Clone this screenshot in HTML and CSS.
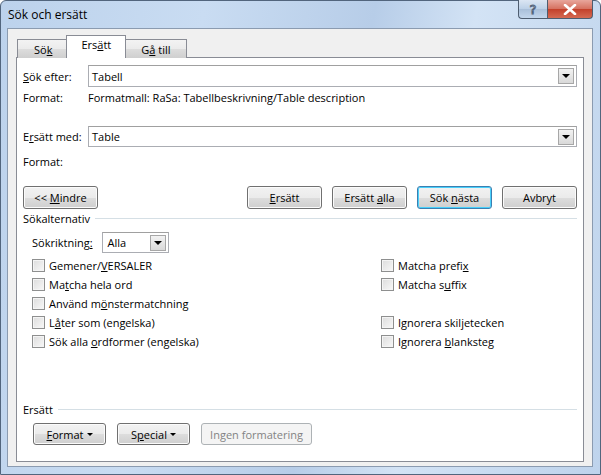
FILE: index.html
```html
<!DOCTYPE html>
<html lang="sv">
<head>
    <meta charset="UTF-8">
    <title>Sök och ersätt</title>
    <link rel="stylesheet" href="styles.css">
</head>
<body>
    <div class="window">
        <div class="titlebar">
            <span class="title">Sök och ersätt</span>
            <div class="caption-btns">
                <span class="cap-btn cap-help">?</span>
                <span class="cap-btn cap-close">
                    <svg width="14" height="11" viewBox="0 0 14 11"><path d="M2 1 L12 10 M12 1 L2 10" stroke="#fff" stroke-width="2.6" stroke-linecap="round"/></svg>
                </span>
            </div>
        </div>
        <div class="client">
            <div class="tabs">
                <span class="tab"><span>Sö<u>k</u></span></span>
                <span class="tab active"><span>Ers<u>ä</u>tt</span></span>
                <span class="tab"><span>G<u>å</u> till</span></span>
            </div>
            <div class="panel">
                <div class="field first">
                    <span class="label"><u>S</u>ök efter:</span>
                    <div class="combo"><span class="value">Tabell</span><span class="drop"></span></div>
                </div>
                <div class="format-row">
                    <span class="label">Format:</span>
                    <span>Formatmall: RaSa: Tabellbeskrivning/Table description</span>
                </div>
                <div class="field second">
                    <span class="label">E<u>r</u>sätt med:</span>
                    <div class="combo"><span class="value">Table</span><span class="drop"></span></div>
                </div>
                <div class="format-row second">
                    <span class="label">Format:</span>
                </div>
                <div class="btn-row">
                    <button class="btn">&lt;&lt; <u>M</u>indre</button>
                    <div class="btn-group">
                        <button class="btn b-replace"><u>E</u>rsätt</button>
                        <button class="btn b-all">Ersätt <u>a</u>lla</button>
                        <button class="btn b-next default">Sök <u>n</u>ästa</button>
                        <button class="btn b-cancel">Avbryt</button>
                    </div>
                </div>
                <div class="group-label"><span>Sökalternativ</span></div>
                <div class="direction">
                    <span>Sökriktning<u>:</u></span>
                    <div class="combo small"><span class="value">Alla</span><span class="drop"></span></div>
                </div>
                <div class="options">
                    <label class="opt"><span class="check"></span><span>Gemener/<u>V</u>ERSALER</span></label>
                    <label class="opt"><span class="check"></span><span>Matcha prefi<u>x</u></span></label>
                    <label class="opt"><span class="check"></span><span>Ma<u>t</u>cha hela ord</span></label>
                    <label class="opt"><span class="check"></span><span>Matcha s<u>u</u>ffix</span></label>
                    <label class="opt"><span class="check"></span><span>Använd m<u>ö</u>nstermatchning</span></label>
                    <span></span>
                    <label class="opt"><span class="check"></span><span>L<u>å</u>ter som (engelska)</span></label>
                    <label class="opt"><span class="check"></span><span>Ignorera skil<u>j</u>etecken</span></label>
                    <label class="opt"><span class="check"></span><span>Sök alla <u>o</u>rdformer (engelska)</span></label>
                    <label class="opt"><span class="check"></span><span>Ignorera <u>b</u>lanksteg</span></label>
                </div>
                <div class="group-label replace"><span>Ersätt</span></div>
                <div class="bottom-row">
                    <button class="btn small"><span><u>F</u>ormat</span><span class="arrow"></span></button>
                    <button class="btn small"><span>S<u>p</u>ecial</span><span class="arrow"></span></button>
                    <button class="btn small disabled" disabled>Ingen formatering</button>
                </div>
            </div>
        </div>
    </div>
</body>
</html>
```

FILE: styles.css
```css
body {
    margin: 0;
    font-family: "Open Sans", "Noto Sans", sans-serif;
    font-size: 11px;
    color: #000;
}
u {
    text-decoration: underline;
    text-underline-offset: 1px;
}
.window {
    width: 601px;
    height: 475px;
    box-sizing: border-box;
    display: flex;
    flex-direction: column;
    border: 1px solid #52657d;
    border-radius: 6px 6px 0 0;
    background: linear-gradient(100deg, #bcd2ec 0%, #c9dcf2 30%, #b7cde8 55%, #d3e3f5 70%, #bed3ec 100%);
}
.titlebar {
    height: 27px;
    display: flex;
    justify-content: space-between;
    align-items: flex-start;
}
.title {
    margin: 5px 0 0 7px;
    font-size: 12px;
}
.caption-btns {
    display: flex;
    margin-right: 7px;
    margin-top: -1px;
}
.cap-btn {
    height: 19px;
    box-sizing: border-box;
    display: flex;
    align-items: center;
    justify-content: center;
    border: 1px solid #4e5d70;
    border-top: none;
}
.cap-help {
    width: 29px;
    border-radius: 0 0 0 4px;
    border-right: none;
    background: linear-gradient(#dbe6f3, #bcd0e7 50%, #a9bfd9 51%, #c3d6ec);
    color: #fff;
    font-family: "DejaVu Sans", sans-serif;
    font-size: 13px;
    -webkit-text-stroke: 1px #54657c;
}
.cap-close {
    width: 46px;
    border-radius: 0 0 4px 0;
    background: linear-gradient(#e8a69c, #d5705f 50%, #c3402b 51%, #d56a52);
}
.client {
    flex: 1;
    margin: 0 7px 7px 6px;
    background: #f0f0f0;
    border: 1px solid #8b9bb0;
    padding: 6px 8px 4px 8px;
    display: flex;
    flex-direction: column;
}
.tabs {
    display: flex;
    align-items: flex-end;
    height: 23px;
    padding-left: 1px;
    margin-bottom: -1px;
    position: relative;
    z-index: 1;
}
.tab {
    height: 19px;
    box-sizing: border-box;
    padding: 0 15px 0 16px;
    border: 1px solid #898c95;
    border-bottom: none;
    background: linear-gradient(#f3f3f3, #ebebeb 50%, #dddddd 51%, #cfcfcf);
    display: flex;
    align-items: center;
    line-height: 1;
}
.tab + .tab {
    border-left: none;
}
.tab.active {
    height: 23px;
    background: #fff;
    margin: 0 -2px;
    padding: 3px 14px 0 14px;
    border-left: 1px solid #898c95;
    position: relative;
    z-index: 2;
    align-items: flex-start;
}
.tab.active + .tab {
    border-left: none;
    padding-left: 17px;
}
.panel {
    flex: 1;
    background: #fff;
    border: 1px solid #898c95;
    padding: 0 6px;
    display: flex;
    flex-direction: column;
}
.field {
    display: flex;
    align-items: center;
    height: 22px;
    margin-top: 7px;
}
.field.second {
    margin-top: 22px;
    height: 21px;
}
.label {
    width: 65px;
    flex-shrink: 0;
}
.combo {
    flex: 1;
    height: 100%;
    box-sizing: border-box;
    border: 1px solid #abadb3;
    border-top-color: #a0a0a0;
    display: flex;
    align-items: center;
    padding: 0 2px 0 3px;
}
.combo .value {
    flex: 1;
}
.drop {
    width: 16px;
    height: 16px;
    box-sizing: border-box;
    border: 1px solid #a7a7a7;
    background: linear-gradient(#f2f2f2, #d9d9d9);
    display: flex;
    align-items: center;
    justify-content: center;
}
.drop::after {
    content: "";
    border-left: 4px solid transparent;
    border-right: 4px solid transparent;
    border-top: 4px solid #000;
}
.format-row {
    display: flex;
    height: 14px;
    align-items: center;
    margin-top: 3px;
}
.format-row.second {
    margin-top: 7px;
}
.btn-row {
    display: flex;
    justify-content: space-between;
    margin-top: 18px;
}
.btn-group {
    display: flex;
    gap: 10px;
}
.btn {
    width: 75px;
    height: 23px;
    box-sizing: border-box;
    border: 1px solid #707070;
    border-radius: 3px;
    background: linear-gradient(#f2f2f2, #ebebeb 50%, #dddddd 51%, #cfcfcf);
    box-shadow: inset 0 0 0 1px #fbfbfb;
    font: inherit;
    color: #000;
    padding: 0;
}
.btn.default {
    border-color: #3c7fb1;
    box-shadow: inset 0 0 0 1px #48d0fb;
}
.group-label {
    display: flex;
    align-items: center;
    height: 15px;
    margin-top: 2px;
}
.group-label::after {
    content: "";
    flex: 1;
    height: 1px;
    background: #d5dfe5;
    margin-left: 5px;
}
.group-label.replace {
    margin-top: 51px;
}
.direction {
    display: flex;
    align-items: center;
    height: 21px;
    margin: 6px 0 0 9px;
    gap: 9px;
}
.combo.small {
    flex: none;
    width: 67px;
    padding-left: 5px;
}
.options {
    display: grid;
    grid-template-columns: 349px 1fr;
    grid-auto-rows: 19px;
    margin: 3px 0 0 9px;
}
.opt {
    display: flex;
    align-items: center;
    gap: 4px;
}
.check {
    width: 13px;
    height: 13px;
    box-sizing: border-box;
    border: 1px solid #8e8f8f;
    background: linear-gradient(135deg, #dcdcdc, #f8f8f8);
    box-shadow: inset 0 0 0 1px #f4f4f4;
}
.bottom-row {
    display: flex;
    gap: 11px;
    margin: 6px 0 0 10px;
}
.btn.small {
    width: 73px;
    height: 22px;
    display: flex;
    align-items: center;
    justify-content: center;
    gap: 3px;
}
.arrow {
    border-left: 3px solid transparent;
    border-right: 3px solid transparent;
    border-top: 3px solid #000;
}
.btn.disabled {
    width: 111px;
    color: #838383;
    border-color: #adb2b5;
    background: #f4f4f4;
    box-shadow: none;
}
```
